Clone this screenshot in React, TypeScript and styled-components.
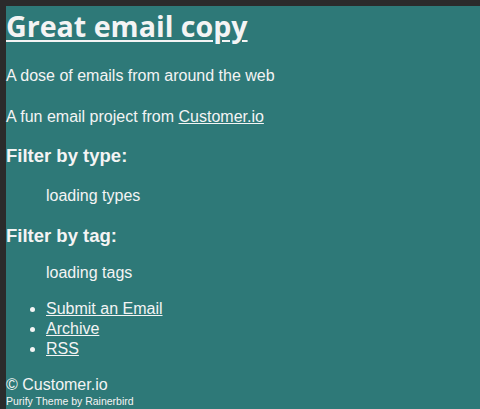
import React from 'react';
import styled, { createGlobalStyle } from 'styled-components';

const GlobalStyle = createGlobalStyle`
  html, body {
    margin: 0;
    padding: 0;
    background: #2b2b2b;
  }
  body {
    font-family: "Liberation Sans", Arial, sans-serif;
  }
`;

const Frame = styled.div`
  padding: 6px 0 0 6px;
  min-height: 409px;
  box-sizing: border-box;
  background: #2b2b2b;
`;

const Page = styled.main`
  background: #2e7978;
  color: #f4f4f4;
  min-height: 403px;
  display: flex;
  flex-direction: column;
  align-items: flex-start;
`;

const Title = styled.h1`
  margin: 0;
  font-family: "Open Sans", sans-serif;
  font-weight: 700;
  font-size: 28.6px;
  line-height: 40px;

  a {
    color: inherit;
    text-decoration: underline;
    text-decoration-thickness: 2px;
    text-underline-offset: 3px;
  }
`;

const Text = styled.p<{ $top: number }>`
  margin: ${(p) => p.$top}px 0 0;
  font-size: 16px;
  line-height: 20px;

  a {
    color: inherit;
  }
`;

const Heading = styled.h3<{ $top: number }>`
  margin: ${(p) => p.$top}px 0 0;
  font-size: 18.5px;
  font-weight: 700;
  line-height: 22px;
`;

const Loading = styled.div<{ $top: number }>`
  margin-top: ${(p) => p.$top}px;
  padding-left: 40px;
  font-size: 16px;
  line-height: 20px;
`;

const Links = styled.ul`
  margin: 16px 0 0;
  padding-left: 40px;
  font-size: 16px;
  line-height: 20px;

  a {
    color: inherit;
  }
`;

const Footer = styled.footer`
  margin-top: 16px;
  display: flex;
  flex-direction: column;
`;

const Copy = styled.div`
  font-size: 16px;
  line-height: 20px;
`;

const Credit = styled.div`
  font-size: 10.5px;
  line-height: 13px;
`;

const links = ['Submit an Email', 'Archive', 'RSS'];

export default function App() {
  return (
    <Frame>
      <GlobalStyle />
      <Page>
        <Title>
          <a href="#">Great email copy</a>
        </Title>
        <Text $top={20}>A dose of emails from around the web</Text>
        <Text $top={21}>
          A fun email project from <a href="#">Customer.io</a>
        </Text>
        <Heading $top={18}>Filter by type:</Heading>
        <Loading $top={19}>loading types</Loading>
        <Heading $top={19}>Filter by tag:</Heading>
        <Loading $top={16}>loading tags</Loading>
        <Links>
          {links.map((l) => (
            <li key={l}>
              <a href="#">{l}</a>
            </li>
          ))}
        </Links>
        <Footer>
          <Copy>© Customer.io</Copy>
          <Credit>Purify Theme by Rainerbird</Credit>
        </Footer>
      </Page>
    </Frame>
  );
}
